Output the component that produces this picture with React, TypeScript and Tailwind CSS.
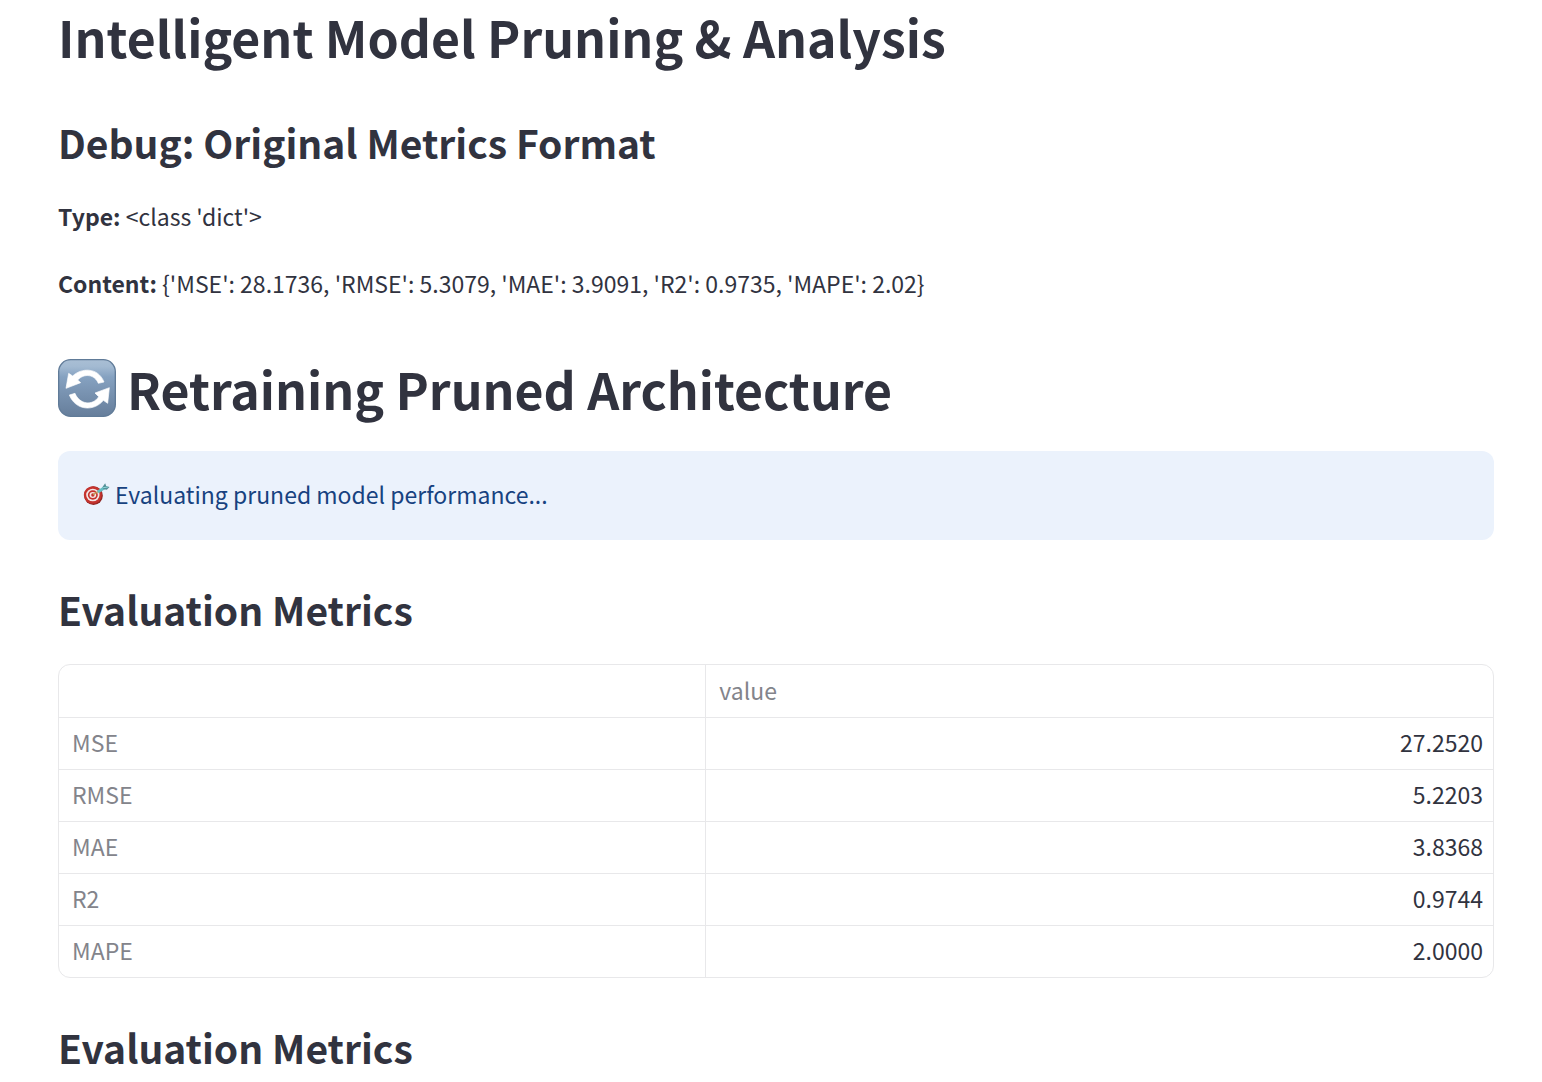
import type { ReactNode } from 'react';

const metrics = [
  { name: 'MSE', value: '27.2520' },
  { name: 'RMSE', value: '5.2203' },
  { name: 'MAE', value: '3.8368' },
  { name: 'R2', value: '0.9744' },
  { name: 'MAPE', value: '2.0000' },
];

function RefreshIcon() {
  return (
    <svg viewBox="24 27 174 174" className="size-[58px] shrink-0" aria-hidden="true">
      <defs>
        <linearGradient id="tile" x1="0" y1="0" x2="0" y2="1">
          <stop offset="0" stopColor="#a9bed4" />
          <stop offset="0.12" stopColor="#a3bad2" />
          <stop offset="0.3" stopColor="#86a2c1" />
          <stop offset="0.6" stopColor="#7892b0" />
          <stop offset="1" stopColor="#667e9b" />
        </linearGradient>
      </defs>
      <rect x="26" y="29" width="170" height="170" rx="36" fill="url(#tile)" stroke="#607b98" strokeWidth="4" />
      <g fill="#fff" stroke="#fff" strokeWidth="2" strokeLinejoin="round">
        <path d="M48 115L56 70L68 78C92 54 144 50 162 96L145 100C134 73 103 69 83 90L92 98Z" />
        <path d="M178 113L173 160L160 151C134 184 78 184 58 135L75 130C88 163 128 169 146 140L135 129Z" />
      </g>
    </svg>
  );
}

function TargetIcon() {
  return (
    <svg viewBox="26 20 80 66" className="h-[22px] w-[27px] shrink-0" aria-hidden="true">
      <ellipse cx="57" cy="58" rx="28" ry="28" fill="#8f2522" />
      <ellipse cx="55" cy="56" rx="27" ry="26" fill="#c5332e" />
      <ellipse cx="55" cy="56" rx="20" ry="19" fill="#f4e6e6" />
      <ellipse cx="55" cy="56" rx="15" ry="14" fill="#c5332e" />
      <ellipse cx="55" cy="56" rx="10" ry="9" fill="#f4e6e6" />
      <ellipse cx="55" cy="56" rx="5" ry="5" fill="#c5332e" />
      <path d="M56 55L74 44" stroke="#c39a55" strokeWidth="4" />
      <path d="M70 47L92 33" stroke="#63bfc4" strokeWidth="9" />
      <path d="M84 32L92 21L95 29L105 32L97 40L87 39Z" fill="#548f98" />
      <path d="M86 34L100 32" stroke="#8cdadc" strokeWidth="3" />
    </svg>
  );
}

function Title({ children }: { children: ReactNode }) {
  return <h1 className="flex items-center gap-[11px] text-[50px] leading-[64px] font-semibold">{children}</h1>;
}

function Subtitle({ children }: { children: ReactNode }) {
  return <h2 className="text-[39px] leading-[52px] font-semibold">{children}</h2>;
}

function MetricsTable() {
  return (
    <div className="mt-[29px] overflow-hidden rounded-xl border border-[#e8e8ea]">
      <table className="w-full table-fixed border-collapse">
        <thead>
          <tr className="h-[52px] text-[#83848b]">
            <th className="w-[45.1%] border-r border-[#e8e8ea]" aria-label="metric" />
            <th scope="col" className="px-[13px] pb-0.5 text-left font-normal">value</th>
          </tr>
        </thead>
        <tbody>
          {metrics.map((metric) => (
            <tr key={metric.name} className="h-[52px] border-t border-[#e8e8ea]">
              <th scope="row" className="border-r border-[#e8e8ea] px-[13px] pb-0.5 text-left font-normal text-[#83848b]">
                {metric.name}
              </th>
              <td className="px-[10px] pb-0.5 text-right">{metric.value}</td>
            </tr>
          ))}
        </tbody>
      </table>
    </div>
  );
}

export default function App() {
  return (
    <main className="bg-white pt-1 pr-12 pb-2 pl-[58px] font-['Noto_Sans_CJK_SC',sans-serif] text-[23px] leading-10 text-[#31333f]">
      <Title>Intelligent Model Pruning &amp; Analysis</Title>
      <div className="mt-12">
        <Subtitle>Debug: Original Metrics Format</Subtitle>
      </div>
      <p className="mt-7">
        <strong className="font-semibold">Type:</strong> &lt;class 'dict'&gt;
      </p>
      <p className="mt-[27px]">
        <strong className="font-semibold">Content:</strong>{' '}
        {"{'MSE': 28.1736, 'RMSE': 5.3079, 'MAE': 3.9091, 'R2': 0.9735, 'MAPE': 2.02}"}
      </p>
      <div className="mt-[53px]">
        <Title>
          <RefreshIcon />
          Retraining Pruned Architecture
        </Title>
      </div>
      <div role="status" className="mt-[31px] flex items-center gap-[5px] rounded-xl bg-[#ebf2fc] px-[25px] pt-[23px] pb-[26px] text-[#174280]">
        <TargetIcon />
        <p>Evaluating pruned model performance...</p>
      </div>
      <section className="mt-[43px]">
        <Subtitle>Evaluation Metrics</Subtitle>
        <MetricsTable />
      </section>
      <section className="mt-[43px]">
        <Subtitle>Evaluation Metrics</Subtitle>
      </section>
    </main>
  );
}
